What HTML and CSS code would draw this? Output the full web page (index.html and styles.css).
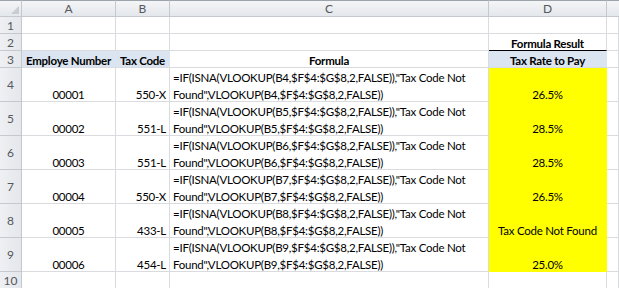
FILE: index.html
```html
<!DOCTYPE html>
<html>
<head>
<meta charset="utf-8">
<link rel="stylesheet" href="styles.css">
</head>
<body>
<div class="sheet">
  <div class="hd corner"><span class="tri"></span></div>
  <div class="hd col">A</div>
  <div class="hd col">B</div>
  <div class="hd col">C</div>
  <div class="hd col">D</div>
  <div class="hd col last"></div>

  <div class="hd row">1</div>
  <div class="c"></div><div class="c"></div><div class="c"></div><div class="c"></div><div class="c"></div>

  <div class="hd row">2</div>
  <div class="c"></div><div class="c"></div><div class="c"></div><div class="c ctr b result"><span class="t">Formula Result</span></div><div class="c"></div>

  <div class="hd row">3</div>
  <div class="c ctr b blue"><span class="t">Employe Number</span></div>
  <div class="c ctr b blue"><span class="t">Tax Code</span></div>
  <div class="c ctr b"><span class="t">Formula</span></div>
  <div class="c ctr b blue"><span class="t">Tax Rate to Pay</span></div>
  <div class="c"></div>

  <div class="hd row tall">4</div>
  <div class="c ctr"><span class="t">00001</span></div>
  <div class="c rt"><span class="t">550-X</span></div>
  <div class="c lf"><span class="t">=IF(ISNA(VLOOKUP(B4,$F$4:$G$8,2,FALSE)),"Tax Code Not<br>Found",VLOOKUP(B4,$F$4:$G$8,2,FALSE))</span></div>
  <div class="c ctr yel"><span class="t">26.5%</span></div>
  <div class="c"></div>

  <div class="hd row tall">5</div>
  <div class="c ctr"><span class="t">00002</span></div>
  <div class="c rt"><span class="t">551-L</span></div>
  <div class="c lf"><span class="t">=IF(ISNA(VLOOKUP(B5,$F$4:$G$8,2,FALSE)),"Tax Code Not<br>Found",VLOOKUP(B5,$F$4:$G$8,2,FALSE))</span></div>
  <div class="c ctr yel"><span class="t">28.5%</span></div>
  <div class="c"></div>

  <div class="hd row tall">6</div>
  <div class="c ctr"><span class="t">00003</span></div>
  <div class="c rt"><span class="t">551-L</span></div>
  <div class="c lf"><span class="t">=IF(ISNA(VLOOKUP(B6,$F$4:$G$8,2,FALSE)),"Tax Code Not<br>Found",VLOOKUP(B6,$F$4:$G$8,2,FALSE))</span></div>
  <div class="c ctr yel"><span class="t">28.5%</span></div>
  <div class="c"></div>

  <div class="hd row tall">7</div>
  <div class="c ctr"><span class="t">00004</span></div>
  <div class="c rt"><span class="t">550-X</span></div>
  <div class="c lf"><span class="t">=IF(ISNA(VLOOKUP(B7,$F$4:$G$8,2,FALSE)),"Tax Code Not<br>Found",VLOOKUP(B7,$F$4:$G$8,2,FALSE))</span></div>
  <div class="c ctr yel"><span class="t">26.5%</span></div>
  <div class="c"></div>

  <div class="hd row tall">8</div>
  <div class="c ctr"><span class="t">00005</span></div>
  <div class="c rt"><span class="t">433-L</span></div>
  <div class="c lf"><span class="t">=IF(ISNA(VLOOKUP(B8,$F$4:$G$8,2,FALSE)),"Tax Code Not<br>Found",VLOOKUP(B8,$F$4:$G$8,2,FALSE))</span></div>
  <div class="c ctr yel"><span class="t">Tax Code Not Found</span></div>
  <div class="c"></div>

  <div class="hd row tall">9</div>
  <div class="c ctr"><span class="t">00006</span></div>
  <div class="c rt"><span class="t">454-L</span></div>
  <div class="c lf"><span class="t">=IF(ISNA(VLOOKUP(B9,$F$4:$G$8,2,FALSE)),"Tax Code Not<br>Found",VLOOKUP(B9,$F$4:$G$8,2,FALSE))</span></div>
  <div class="c ctr yel"><span class="t">25.0%</span></div>
  <div class="c"></div>

  <div class="hd row">10</div>
  <div class="c"></div><div class="c"></div><div class="c"></div><div class="c"></div><div class="c"></div>
</div>
</body>
</html>
```
FILE: styles.css
```css
html, body {
  margin: 0;
  padding: 0;
  background: #ffffff;
  overflow: hidden;
}
.sheet {
  display: grid;
  grid-template-columns: 22px 94px 54px 319px 118px 1fr;
  grid-template-rows: 17px 17px 17px 17px 34px 34px 34px 34px 34px 34px 17px;
  width: 619px;
  font-family: Lato, "Open Sans", sans-serif;
  font-size: 11.5px;
  letter-spacing: -0.25px;
  color: #000;
}
.sheet > div {
  box-sizing: border-box;
  border-right: 1px solid #d9dbde;
  border-bottom: 1px solid #d9dbde;
  white-space: nowrap;
}
.hd {
  background: linear-gradient(#f4f5f7, #e4e7eb);
  color: #55585d;
  display: flex;
  align-items: center;
  justify-content: center;
  font-size: 12px;
  letter-spacing: 0;
  overflow: hidden;
}
.sheet > .hd {
  border-right-color: #c5c9ce;
  border-bottom-color: #c5c9ce;
}
.col {
  border-top: 1px solid #9da3aa;
}
.corner {
  border-top: 1px solid #9da3aa;
  position: relative;
}
.tri {
  position: absolute;
  right: 2px;
  bottom: 2px;
  width: 0;
  height: 0;
  border-left: 8px solid transparent;
  border-bottom: 8px solid #c9ccd0;
}
.row {
  background: linear-gradient(90deg, #eef0f3, #e4e7eb);
}
.sheet > .last {
  border-right: none;
}
.c {
  display: flex;
  align-items: flex-end;
  padding: 0 3px;
  line-height: 17px;
}
.t {
  margin-bottom: -2px;
}
.ctr {
  justify-content: center;
}
.rt {
  justify-content: flex-end;
}
.lf {
  justify-content: flex-start;
}
.b {
  font-weight: bold;
}
.blue {
  background: #dbe5f1;
}
.sheet > .blue {
  border-right-color: #dbe5f1;
}
.sheet > .result {
  border-bottom: 1px solid #000;
}
.yel {
  background: #ffff00;
}
.sheet > .yel {
  border-color: #ffff00;
  border-right-color: #ffff00;
}
```
